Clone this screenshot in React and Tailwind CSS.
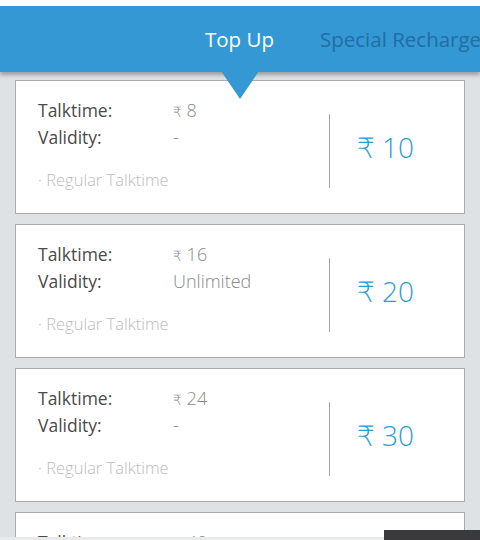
const plans = [
  { talktime: '8', validity: '-', price: '10' },
  { talktime: '16', validity: 'Unlimited', price: '20' },
  { talktime: '24', validity: '-', price: '30' },
  { talktime: '40', validity: '-', price: '50' },
]

function PlanCard({ plan }) {
  return (
    <div className="flex h-[134px] shrink-0 border border-[#a9abad] bg-white">
      <div className="flex-1 pl-[22px] pt-[16px]">
        <div className="flex h-[27px] items-center">
          <span className="w-[135px] text-[17.5px] text-[#4a4a4a]">Talktime:</span>
          <span className="text-[18px] font-light text-[#8a8a8a]">
            <span className="text-[14px]">₹</span> {plan.talktime}
          </span>
        </div>
        <div className="flex h-[27px] items-center">
          <span className="w-[135px] text-[17.5px] text-[#4a4a4a]">Validity:</span>
          <span className="text-[18px] font-light text-[#8a8a8a]">{plan.validity}</span>
        </div>
        <div className="mt-[16px] flex h-[27px] items-center text-[16.5px] font-light text-[#bcbcbc]">
          · Regular Talktime
        </div>
      </div>
      <div className="mt-[8px] h-[74px] w-px self-center bg-[#a8a8a8]" />
      <div className="flex w-[134px] items-center pl-[27px] text-[28px] font-light text-[#2b9bd7]">
        ₹ {plan.price}
      </div>
    </div>
  )
}

export default function App() {
  return (
    <div
      className="relative h-[540px] w-[480px] overflow-hidden bg-[#dfe2e5]"
      style={{ fontFamily: '"Open Sans", "DejaVu Sans", sans-serif' }}
    >
      <div className="h-[6px] bg-white" />
      <div className="relative z-10 flex h-[66px] items-center bg-[#3498d4] pl-[205px] shadow-[0_3px_4px_rgba(0,0,0,0.3)]">
        <span className="whitespace-nowrap text-[20.5px] text-white">Top Up</span>
        <span className="ml-[46px] whitespace-nowrap text-[20.5px] text-[#1f6ea3]">Special Recharge</span>
        <svg className="absolute left-[221px] top-[65px]" width="38" height="29" viewBox="0 0 38 29">
          <polygon points="0,0 38,0 19,28" fill="#3498d4" />
        </svg>
      </div>
      <div className="flex flex-col gap-[10px] px-[15px] pt-[8px]">
        {plans.map((p, i) => (
          <PlanCard key={i} plan={p} />
        ))}
      </div>
      <div className="absolute bottom-0 left-0 h-[3px] w-full bg-[#e9eaec]" />
      <div className="absolute bottom-0 right-0 h-[10px] w-[96px] bg-[#3a3a3d]" />
    </div>
  )
}
